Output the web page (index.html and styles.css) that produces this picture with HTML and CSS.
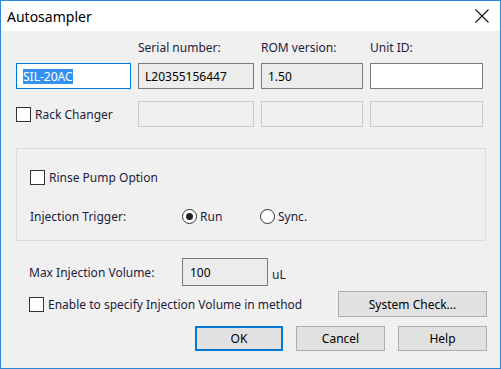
FILE: index.html
```html
<!DOCTYPE html>
<html>
<head>
    <meta charset="UTF-8">
    <title>Autosampler</title>
    <link rel="stylesheet" href="styles.css">
</head>
<body>
    <div class="window">
        <div class="titlebar">
            <span class="title">Autosampler</span>
            <svg class="close" width="14" height="14" viewBox="0 0 14 14">
                <path d="M0.5 0.5 L13.5 13.5 M13.5 0.5 L0.5 13.5" stroke="#111" stroke-width="1.1" fill="none"/>
            </svg>
        </div>

        <div class="content">
            <div class="cols heads">
                <span></span>
                <span>Serial number:</span>
                <span>ROM version:</span>
                <span>Unit ID:</span>
            </div>

            <div class="cols fields">
                <div class="field focus"><span class="sel">SIL-20AC</span></div>
                <div class="field ro">L20355156447</div>
                <div class="field ro">1.50</div>
                <div class="field edit"></div>
            </div>

            <div class="cols fields second">
                <label class="check"><span class="box"></span>Rack Changer</label>
                <div class="field off"></div>
                <div class="field off"></div>
                <div class="field off"></div>
            </div>

            <div class="group">
                <label class="check rinse"><span class="box"></span>Rinse Pump Option</label>
                <div class="trigger">
                    <span class="trigger-label">Injection Trigger:</span>
                    <label class="radio on"><span class="ring"></span>Run</label>
                    <label class="radio"><span class="ring"></span>Sync.</label>
                </div>
            </div>

            <div class="volume">
                <span class="volume-label">Max Injection Volume:</span>
                <div class="field ro vol">100</div>
                <span class="unit">uL</span>
            </div>

            <div class="enable-row">
                <label class="check"><span class="box"></span>Enable to specify Injection Volume in method</label>
                <button class="btn syscheck">System Check...</button>
            </div>

            <div class="buttons">
                <button class="btn default">OK</button>
                <button class="btn">Cancel</button>
                <button class="btn">Help</button>
            </div>
        </div>
    </div>
</body>
</html>
```

FILE: styles.css
```css
body {
    margin: 0;
    font-family: "Noto Sans", "Open Sans", sans-serif;
    font-size: 12px;
    color: #1c1c3c;
}
.window {
    width: 501px;
    height: 369px;
    box-sizing: border-box;
    border: 1px solid #2b88d8;
    background: #f0f0f0;
    display: flex;
    flex-direction: column;
}
.titlebar {
    height: 30px;
    background: #fff;
    display: flex;
    align-items: center;
    justify-content: space-between;
    padding: 0 11px 0 6px;
}
.title {
    font-size: 14px;
    color: #000;
}
.content {
    flex: 1;
    padding: 9px 13px 0 15px;
}
.cols {
    display: grid;
    grid-template-columns: 115px 116px 102px 113px;
    column-gap: 7px;
}
.heads {
    height: 23px;
    line-height: 15px;
}
.fields > * {
    height: 26px;
}
.fields.second {
    margin-top: 12px;
}
.field {
    box-sizing: border-box;
    border: 1px solid #7a7a7a;
    display: flex;
    align-items: center;
    padding-left: 6px;
    color: #000;
}
.field.focus {
    border-color: #0078d7;
    background: #fff;
}
.sel {
    background: #3391f0;
    color: #fff;
    line-height: 15px;
}
.field.ro {
    background: #ececec;
}
.field.edit {
    background: #fff;
}
.field.off {
    border-color: #cccccc;
    background: #f0f0f0;
}
.check {
    display: flex;
    align-items: center;
    gap: 4px;
}
.box {
    width: 13px;
    height: 13px;
    border: 1px solid #333;
    background: #fff;
}
.group {
    margin-top: 21px;
    width: 470px;
    height: 93px;
    box-sizing: border-box;
    border: 1px solid #dcdcdc;
    padding: 20px 0 0 13px;
}
.trigger {
    display: flex;
    align-items: center;
    margin-top: 22px;
}
.trigger-label {
    width: 152px;
}
.radio {
    display: flex;
    align-items: center;
    gap: 3px;
    width: 78px;
}
.ring {
    width: 13px;
    height: 13px;
    border: 1px solid #333;
    border-radius: 50%;
    background: #fff;
    display: flex;
    align-items: center;
    justify-content: center;
}
.radio.on .ring::after {
    content: "";
    width: 7px;
    height: 7px;
    border-radius: 50%;
    background: #222;
}
.volume {
    margin-top: 17px;
    display: flex;
    align-items: center;
    padding-left: 13px;
}
.volume-label {
    width: 153px;
}
.field.vol {
    width: 86px;
    height: 28px;
    padding-left: 7px;
}
.unit {
    margin-left: 4px;
    margin-top: 4px;
}
.enable-row {
    margin-top: 5px;
    display: flex;
    align-items: center;
    justify-content: space-between;
    padding-left: 13px;
}
.btn {
    font-family: inherit;
    font-size: 12px;
    color: #000;
    background: #e1e1e1;
    border: 1px solid #adadad;
    height: 25px;
    width: 89px;
    padding: 0;
}
.btn.syscheck {
    width: 149px;
    height: 26px;
}
.btn.default {
    border: 2px solid #0078d7;
    width: 88px;
}
.buttons {
    margin-top: 9px;
    display: flex;
    justify-content: flex-end;
    gap: 13px;
}
```
